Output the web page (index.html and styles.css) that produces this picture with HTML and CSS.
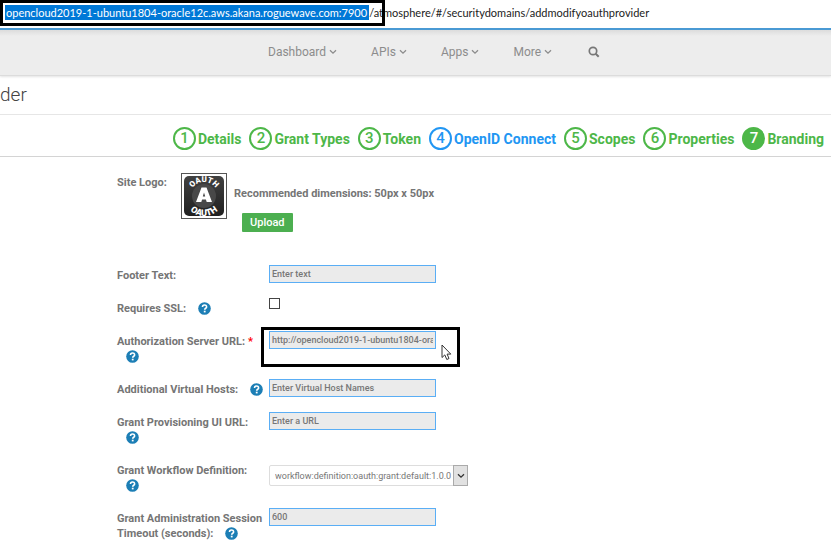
FILE: index.html
```html
<!DOCTYPE html>
<html lang="en">
<head>
<meta charset="utf-8">
<title>Add OAuth Provider</title>
<link rel="stylesheet" href="styles.css">
</head>
<body>
<svg class="defs" aria-hidden="true">
  <symbol id="chevron" viewBox="0 0 8 6"><path d="M1 1.2 4 4.2 7 1.2" fill="none" stroke="currentColor" stroke-width="1.3"/></symbol>
  <symbol id="help" viewBox="0 0 13 13"><circle cx="6.500" cy="6.500" r="6.300" fill="#1c7eb5"/><path d="M4.500 5C4.500 2.400 8.600 2.400 8.600 4.900C8.600 6.300 6.700 6.200 6.700 7.800" fill="none" stroke="#fff" stroke-width="1.600"/><rect x="5.800" y="8.700" width="1.800" height="1.700" fill="#fff"/></symbol>
</svg>
<div class="address"><span class="selected">opencloud2019-1-ubuntu1804-oracle12c.aws.akana.roguewave.com:7900</span><span>/atmosphere/#/securitydomains/addmodifyoauthprovider</span><div class="address-frame"></div></div>
<nav class="nav">
  <a href="#">Dashboard <svg class="chev"><use href="#chevron"/></svg></a>
  <a href="#">APIs <svg class="chev"><use href="#chevron"/></svg></a>
  <a href="#">Apps <svg class="chev"><use href="#chevron"/></svg></a>
  <a href="#">More <svg class="chev"><use href="#chevron"/></svg></a>
  <button class="search" aria-label="Search"><svg viewBox="0 0 12 12"><circle cx="5" cy="5" r="3.700" fill="none" stroke="currentColor" stroke-width="1.700"/><path d="M7.700 7.700 10.700 10.700" stroke="currentColor" stroke-width="2"/></svg></button>
</nav>
<h1 class="title">der</h1>
<ol class="steps">
  <li><a href="#"><b>1</b>Details</a></li>
  <li><a href="#"><b>2</b>Grant Types</a></li>
  <li><a href="#"><b>3</b>Token</a></li>
  <li class="alt"><a href="#"><b>4</b>OpenID Connect</a></li>
  <li><a href="#"><b>5</b>Scopes</a></li>
  <li><a href="#"><b>6</b>Properties</a></li>
  <li class="current"><a href="#"><b>7</b>Branding</a></li>
</ol>
<form class="form">
  <div class="logo-row">
    <span class="logo-label">Site Logo:</span>
    <svg class="logo" viewBox="0 0 46 46" role="img" aria-label="OAuth logo">
      <defs>
        <linearGradient id="dark" x2="0" y2="1"><stop stop-color="#414141"/><stop offset="1" stop-color="#202020"/></linearGradient>
        <path id="arc-top" d="M9 23A14 14 0 0 1 37 23"/>
        <path id="arc-bottom" d="M3 23A20 20 0 0 0 43 23"/>
      </defs>
      <rect x=".5" y=".5" width="45" height="45" fill="#fff" stroke="#555"/>
      <rect x="3" y="3" width="40" height="40" rx="5" fill="url(#dark)"/>
      <circle cx="23" cy="23" r="12" fill="#484848"/>
      <path d="M20.500 14.500h5L31 29h-5.300l-.8-2.500h-3.800L20.300 29H15Z" fill="#fff"/>
      <path d="M21.800 23.500h2.400L23 19.500Z" fill="#444"/>
      <text class="logo-text"><textPath href="#arc-top" startOffset="50%">OAUTH</textPath></text>
      <text class="logo-text lower"><textPath href="#arc-bottom" startOffset="50%">OAUTH</textPath></text>
    </svg>
    <div class="logo-info">
      <span>Recommended dimensions: 50px x 50px</span>
      <button type="button" class="upload">Upload</button>
    </div>
  </div>
  <div class="row"><label for="footer">Footer Text:</label><input id="footer" class="field" type="text" placeholder="Enter text"></div>
  <div class="row"><label for="ssl">Requires SSL: <svg class="help"><use href="#help"/></svg></label><input id="ssl" class="check" type="checkbox"></div>
  <div class="row tall"><label for="auth">Authorization Server URL: <span class="required">*</span> <svg class="help"><use href="#help"/></svg></label>
    <div class="framed"><input id="auth" class="field" type="text" value="http://opencloud2019-1-ubuntu1804-oracle12c.aws.akana.roguewave.com:7900"><div class="field-frame"></div>
      <svg class="pointer" viewBox="0 0 11 17"><path d="M1 1V13.500L3.800 10.900 5.800 15.500 8 14.500 6.100 10.100H9.800Z" fill="#fff" stroke="#333"/></svg>
    </div></div>
  <div class="row"><label for="hosts">Additional Virtual Hosts: <svg class="help"><use href="#help"/></svg></label><input id="hosts" class="field" type="text" placeholder="Enter Virtual Host Names"></div>
  <div class="row tall"><label for="grant">Grant Provisioning UI URL: <svg class="help"><use href="#help"/></svg></label><input id="grant" class="field" type="text" placeholder="Enter a URL"></div>
  <div class="row tall"><label for="flow">Grant Workflow Definition: <svg class="help"><use href="#help"/></svg></label>
    <div class="select"><select id="flow"><option>workflow:definition:oauth:grant:default:1.0.0</option></select><span class="arrow"><svg class="chev"><use href="#chevron"/></svg></span></div></div>
  <div class="row tall"><label for="timeout">Grant Administration Session Timeout (seconds): <svg class="help"><use href="#help"/></svg></label><input id="timeout" class="field" type="text" value="600"></div>
</form>
</body>
</html>
```
FILE: styles.css
```css
* { box-sizing: border-box; }
body { margin: 0; background: #fff; color: #757575; font-family: Roboto, sans-serif; font-size: 12px; }
a { color: inherit; text-decoration: none; }
.defs { position: absolute; width: 0; height: 0; }

.address { position: relative; display: flex; align-items: flex-start; height: 30px; padding: 5px 5px 0; border-bottom: 2px solid #4a9ad4; font: 11px/15px Lato, sans-serif; color: #222; white-space: nowrap; }
.selected { background: #0078d7; color: #fff; padding: 0 2px 0 1px; }
.address-frame { position: absolute; left: 0; top: 0; width: 385px; height: 26px; border: 3px solid #000; }

.nav { display: flex; align-items: center; gap: 34px; height: 46px; padding: 0 0 2px 268px; background: linear-gradient(#dcdcdc, #ededed 6px); border-bottom: 1px solid #dcdcdc; box-shadow: 0 1px 2px #e4e4e4; color: #8c8c8c; }
.nav a { display: flex; align-items: center; gap: 3px; }
.chev { width: 8px; height: 6px; }
.search { width: 12px; height: 12px; padding: 0; margin-left: 2px; border: 0; background: none; color: #777; }
.search svg { display: block; }

.title { margin: 0; height: 39px; border-bottom: 1px solid #e6e6e6; font-size: 19px; line-height: 38px; font-weight: 300; color: #444; }

.steps { display: flex; justify-content: flex-end; align-items: center; gap: 8px; margin: 0; padding: 6px 7px 0 0; height: 42px; border-bottom: 1px solid #d4d4d4; list-style: none; color: #4db748; font-size: 14px; font-weight: 700; white-space: nowrap; }
.steps a { display: flex; align-items: center; gap: 2px; }
.steps b { width: 23px; height: 23px; border: 2px solid currentColor; border-radius: 50%; font-size: 15px; line-height: 19px; font-weight: 500; text-align: center; }
.steps .alt { color: #2196f3; }
.steps .current b { background: #4db748; border-color: #4db748; color: #fff; }

.form { padding: 16px 0 0 117px; font-size: 11px; line-height: 15px; font-weight: 700; }
.logo-row { display: flex; height: 92px; }
.logo-label { width: 64px; padding-top: 2px; }
.logo { width: 46px; height: 46px; }
.logo-text { fill: #fff; font: 900 8px Roboto, sans-serif; text-anchor: middle; }
.logo-text.lower { font-size: 9px; }
.logo-info { display: flex; flex-direction: column; align-items: flex-start; gap: 12px; margin-left: 7px; padding-top: 13px; }
.upload { height: 19px; margin-left: 8px; padding: 0 8px; border: 0; border-radius: 1px; background: #4caf50; color: #fff; font: 500 11px/19px Roboto, sans-serif; }

.row { display: grid; grid-template-columns: 152px 1fr; align-items: start; min-height: 18px; margin-bottom: 15px; }
.row:last-child { margin-bottom: 0; }
.row > label { padding-top: 3px; }
.tall { min-height: 33px; }
.help { width: 13px; height: 13px; margin: 0 0 -3px 9px; }
.required { color: #f00; }
.field { display: block; width: 167px; height: 18px; margin: 0; padding: 0 2px; border: 1px solid #5aaef5; border-radius: 0; background: #ebebeb; color: #777; font: 500 9px/16px Roboto, sans-serif; }
.field::placeholder { color: #777; opacity: 1; }
.check { appearance: none; width: 11px; height: 11px; margin: 0; border: 1px solid #444; background: #fff; }
.framed { position: relative; }
.field-frame { position: absolute; left: -8px; top: -4px; width: 199px; height: 40px; border: 3px solid #000; pointer-events: none; }
.pointer { position: absolute; left: 172px; top: 13px; width: 11px; height: 17px; }
.select { display: flex; position: relative; width: 199px; height: 21px; margin-top: 5px; }
.select select { appearance: none; width: 100%; margin: 0; padding: 0 15px 0 5px; border: 1px solid #ddd; border-radius: 2px; background: #fff; color: #777; font: 9px Roboto, sans-serif; }
.arrow { position: absolute; right: 0; top: 0; display: flex; align-items: center; justify-content: center; width: 15px; height: 21px; border: 1px solid #aaa; background: #e1e1e1; color: #333; pointer-events: none; }
```
